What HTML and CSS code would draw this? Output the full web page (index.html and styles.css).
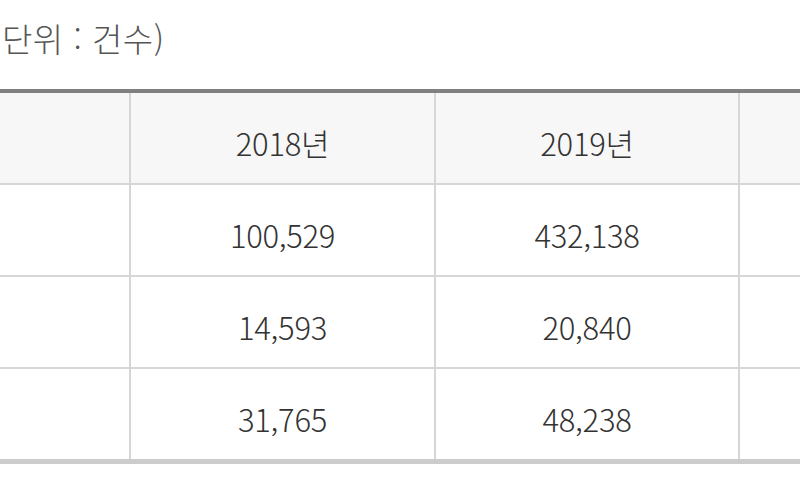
FILE: index.html
```html
<!DOCTYPE html>
<html lang="ko">
<head>
<meta charset="utf-8">
<link rel="stylesheet" href="styles.css">
</head>
<body>
<p class="unit">단위 : 건수)</p>
<div class="stats" role="table">
  <div class="cell head first"></div>
  <div class="cell head">2018년</div>
  <div class="cell head">2019년</div>
  <div class="cell head"></div>

  <div class="cell first"></div>
  <div class="cell">100,529</div>
  <div class="cell">432,138</div>
  <div class="cell"></div>

  <div class="cell first"></div>
  <div class="cell">14,593</div>
  <div class="cell">20,840</div>
  <div class="cell"></div>

  <div class="cell first last"></div>
  <div class="cell last">31,765</div>
  <div class="cell last">48,238</div>
  <div class="cell last"></div>
</div>
</body>
</html>
```

FILE: styles.css
```css
html, body {
  margin: 0;
  padding: 0;
  overflow: hidden;
  background: #ffffff;
}

body {
  font-family: "Noto Sans CJK KR", "Noto Sans", sans-serif;
  color: #333333;
}

.unit {
  margin: 0 0 0 2px;
  height: 89px;
  padding-top: 15px;
  box-sizing: border-box;
  font-size: 33px;
  font-weight: 300;
  line-height: 46px;
  letter-spacing: 0.5px;
  color: #555555;
}

.stats {
  display: grid;
  grid-template-columns: 129px 305px 304px 305px;
  width: max-content;
  border-top: 4px solid #808080;
  border-bottom: 5px solid #cccccc;
}

.cell {
  box-sizing: border-box;
  height: 92px;
  border-bottom: 2px solid #d6d6d6;
  border-left: 2px solid #d6d6d6;
  display: flex;
  align-items: center;
  justify-content: center;
  padding-top: 8px;
  font-size: 31px;
  font-weight: 300;
  letter-spacing: -0.3px;
}

.cell.first {
  border-left: none;
}

.cell.last {
  height: 90px;
  border-bottom: none;
}

.head {
  background: #f7f7f7;
}
```
